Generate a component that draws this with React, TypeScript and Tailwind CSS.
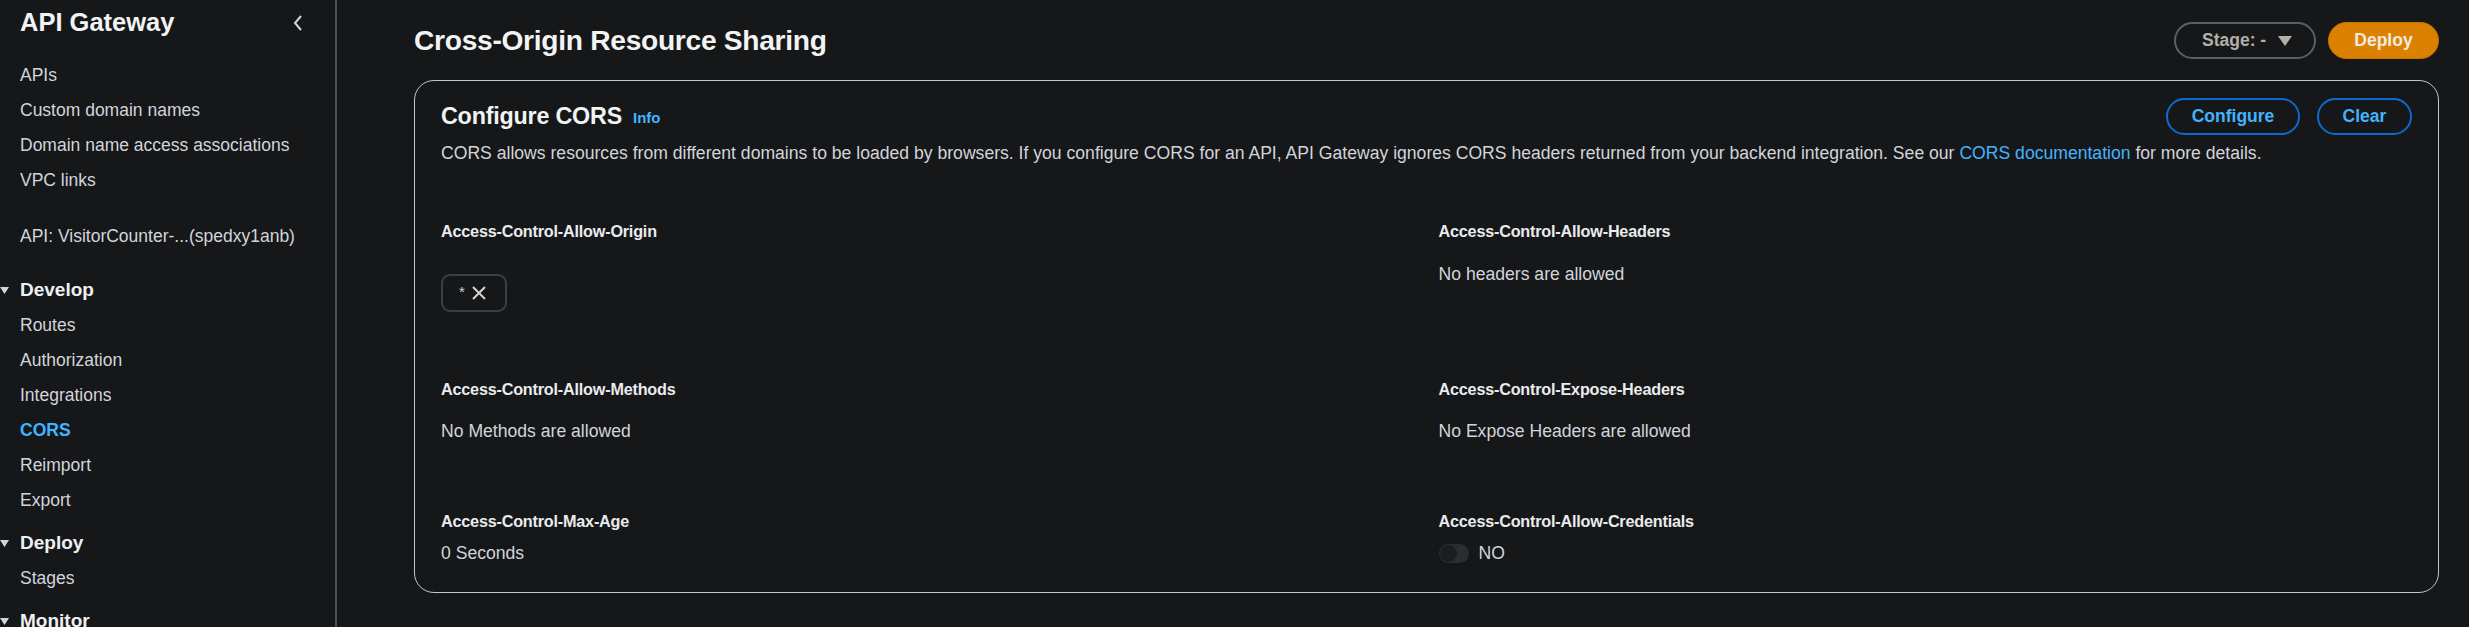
import React from "react";

const navItem = "h-[35px] flex items-center pl-[20px] text-[17.5px] text-[#d1d5db]";

function Tri() {
  return (
    <svg width="9" height="9" viewBox="0 0 10 10" className="absolute left-0 top-[13px]">
      <path d="M0 1 L10 1 L5 9 Z" fill="#d1d5db" />
    </svg>
  );
}

function Section({ label }: { label: string }) {
  return (
    <div className="relative h-[35px] flex items-center pl-[20px] text-[19px] font-bold text-[#eef0f2]">
      <Tri />
      {label}
    </div>
  );
}

const label = "font-bold text-[16.2px] text-[#e9ebed] tracking-[-0.2px]";

export default function App() {
  return (
    <div className="w-[2469px] h-[627px] overflow-hidden bg-[#161719] flex font-['Liberation_Sans',Arial,sans-serif]">
      <aside className="w-[337px] shrink-0 h-full border-r-2 border-[#4b4e53]">
        <div className="h-[45px] flex items-center justify-between pl-[20px] pr-[31px]">
          <span className="text-[25.5px] font-bold text-[#f2f3f3]">API Gateway</span>
          <svg width="12" height="18" viewBox="0 0 12 18">
            <polyline points="9,2 3,9 9,16" fill="none" stroke="#d1d5db" strokeWidth="2" />
          </svg>
        </div>
        <div className="mt-[13px]">
          <div className={navItem}>APIs</div>
          <div className={navItem}>Custom domain names</div>
          <div className={navItem}>Domain name access associations</div>
          <div className={navItem}>VPC links</div>
        </div>
        <div className={navItem + " mt-[21px]"}>API: VisitorCounter-...(spedxy1anb)</div>
        <div className="mt-[19px]">
          <Section label="Develop" />
          <div className={navItem}>Routes</div>
          <div className={navItem}>Authorization</div>
          <div className={navItem}>Integrations</div>
          <div className="h-[35px] flex items-center pl-[20px] text-[17.5px] font-bold text-[#42b4ff]">CORS</div>
          <div className={navItem}>Reimport</div>
          <div className={navItem}>Export</div>
        </div>
        <div className="mt-[8px]">
          <Section label="Deploy" />
          <div className={navItem}>Stages</div>
        </div>
        <div className="mt-[8px]">
          <Section label="Monitor" />
        </div>
      </aside>

      <main className="flex-1 pl-[77px] pr-[30px]">
        <div className="h-[80px] flex items-center justify-between">
          <h1 className="text-[28.2px] font-bold text-[#f2f3f3] tracking-[-0.3px]">Cross-Origin Resource Sharing</h1>
          <div className="flex items-center gap-[12px] mt-[1px]">
            <div className="h-[37px] w-[142px] rounded-full border-2 border-[#5a5f66] flex items-center justify-between pl-[26px] pr-[22px] text-[17.5px] font-bold text-[#b3afa8]">
              <span>Stage: -</span>
              <svg width="14" height="10" viewBox="0 0 14 10">
                <path d="M0 0 L14 0 L7 10 Z" fill="#b3afa8" />
              </svg>
            </div>
            <div className="h-[37px] w-[111px] rounded-full bg-[#dc8000] border border-[#c97500] flex items-center justify-center text-[17.5px] font-bold text-[#f2ebe0]">
              Deploy
            </div>
          </div>
        </div>

        <section className="h-[513px] rounded-[20px] border border-[#c3c7cc] px-[26px] pt-[17px]">
          <div className="flex items-start justify-between">
            <div className="h-[37px] flex items-center gap-[11px]">
              <h2 className="text-[23.3px] font-bold text-[#f2f3f3] tracking-[-0.2px]">Configure CORS</h2>
              <span className="text-[15px] font-bold text-[#42b4ff] mt-[3px]">Info</span>
            </div>
            <div className="flex gap-[17px]">
              <div className="h-[37px] w-[134px] rounded-full border-2 border-[#0b6bcf] flex items-center justify-center text-[17.5px] font-bold text-[#42b4ff]">Configure</div>
              <div className="h-[37px] w-[95px] rounded-full border-2 border-[#0b6bcf] flex items-center justify-center text-[17.5px] font-bold text-[#42b4ff]">Clear</div>
            </div>
          </div>
          <p className="mt-[6px] h-[25px] leading-[25px] text-[17.6px] text-[#d1d5db] whitespace-nowrap">
            CORS allows resources from different domains to be loaded by browsers. If you configure CORS for an API, API Gateway ignores CORS headers returned from your backend integration. See our{" "}
            <span className="text-[#42b4ff]">CORS documentation</span> for more details.
          </p>

          <div className="mt-[53px] grid grid-cols-2 gap-x-[24px] gap-y-[65px] text-[17.6px] leading-[25px]">
            <div className="flex flex-col items-start">
              <div className={label}>Access-Control-Allow-Origin</div>
              <div className="mt-[30px] h-[38px] w-[66px] rounded-[9px] border-2 border-[#3a3f45] flex items-center pl-[16px] gap-[6px]">
                <span className="text-[15px] text-[#d1d5db] leading-none mt-[-3px]">*</span>
                <svg width="16" height="16" viewBox="0 0 16 16">
                  <path d="M2 2 L14 14 M14 2 L2 14" stroke="#d6d2cb" strokeWidth="2" fill="none" />
                </svg>
              </div>
            </div>
            <div className="flex flex-col items-start">
              <div className={label}>Access-Control-Allow-Headers</div>
              <div className="mt-[18px] text-[#d1d5db]">No headers are allowed</div>
            </div>

            <div className="flex flex-col items-start">
              <div className={label}>Access-Control-Allow-Methods</div>
              <div className="mt-[17px] text-[#d1d5db]">No Methods are allowed</div>
            </div>
            <div className="flex flex-col items-start">
              <div className={label}>Access-Control-Expose-Headers</div>
              <div className="mt-[17px] text-[#d1d5db]">No Expose Headers are allowed</div>
            </div>

            <div className="flex flex-col items-start">
              <div className={label}>Access-Control-Max-Age</div>
              <div className="mt-[7px] text-[#d1d5db]">0 Seconds</div>
            </div>
            <div className="flex flex-col items-start">
              <div className={label}>Access-Control-Allow-Credentials</div>
              <div className="mt-[7px] flex items-center gap-[10px] text-[#d1d5db]">
                <div className="w-[30px] h-[19px] rounded-full bg-[#2a2e33] flex items-center pl-[1px]">
                  <div className="w-[17px] h-[17px] rounded-full bg-[#1b1d20]" />
                </div>
                <span>NO</span>
              </div>
            </div>
          </div>
        </section>
      </main>
    </div>
  );
}
